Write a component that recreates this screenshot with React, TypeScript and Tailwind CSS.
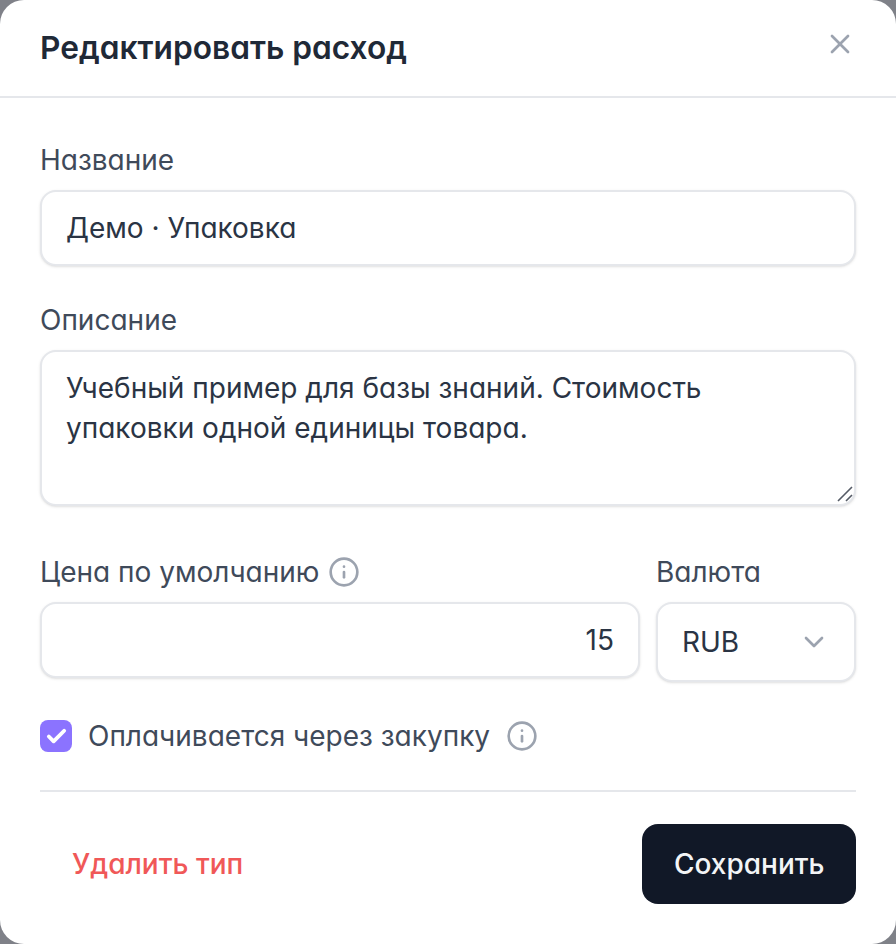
import React from 'react';
import { X, ChevronDown, Info, Check } from 'lucide-react';

const fontClass = "font-['Inter','Liberation_Sans',sans-serif] [font-feature-settings:'cv11']";

const App: React.FC = () => {
  return (
    <div className={`w-[896px] h-[944px] bg-[#7f8188] overflow-hidden ${fontClass}`}>
      <div className="w-full h-full bg-white rounded-[24px] flex flex-col">
        {/* header */}
        <div className="h-[98px] shrink-0 border-b-2 border-[#e5e7eb] pl-10 pr-11 flex items-center justify-between">
          <h2 className="text-[31.7px] leading-[40px] font-semibold text-[#1f2937]">Редактировать расход</h2>
          <button className="text-[#9ca3af] -mt-2 -mr-1">
            <X size={32} strokeWidth={2} />
          </button>
        </div>

        <div className="px-10 pt-[42px] flex flex-col flex-1">
          <label className="text-[28px] leading-[40px] text-[#3f4a5a] mb-[10px] block">Название</label>
          <input
            defaultValue="Демо · Упаковка"
            className="w-full h-[76px] px-[24px] text-[28px] text-[#2a3444] bg-white border-2 border-[#e5e7eb] rounded-2xl shadow-sm outline-none"
          />

          <label className="text-[28px] leading-[40px] text-[#3f4a5a] mt-[34px] mb-[10px] block">Описание</label>
          <div className="relative">
            <textarea
              defaultValue={'Учебный пример для базы знаний. Стоимость упаковки одной единицы товара.'}
              className="w-full h-[156px] px-[24px] py-4 text-[28px] leading-[40px] text-[#2a3444] bg-white border-2 border-[#e5e7eb] rounded-2xl shadow-sm outline-none block resize-none"
            />
            <svg width="18" height="18" viewBox="0 0 18 18" className="absolute right-[2px] bottom-[3px] text-[#555b66]">
              <path d="M2 16 16 2M10 16l6-6" stroke="currentColor" strokeWidth="1.6" fill="none" />
            </svg>
          </div>

          <div className="flex gap-4 mt-[46px]">
            <div className="flex-1">
              <div className="flex items-center gap-[9px] mb-[10px] h-[40px]">
                <span className="text-[28px] leading-[40px] text-[#3f4a5a]">Цена по умолчанию</span>
                <Info size={32} strokeWidth={2} className="text-[#9ca3af]" />
              </div>
              <input
                defaultValue="15"
                className="w-full h-[76px] px-[24px] text-right text-[28px] text-[#2a3444] bg-white border-2 border-[#e5e7eb] rounded-2xl shadow-sm outline-none"
              />
            </div>
            <div className="w-[200px]">
              <label className="text-[28px] leading-[40px] text-[#3f4a5a] mb-[10px] block">Валюта</label>
              <div className="h-[80px] px-[24px] flex items-center justify-between bg-white border-2 border-[#e5e7eb] rounded-2xl shadow-sm text-[28px] text-[#2a3444]">
                <span>RUB</span>
                <ChevronDown size={32} strokeWidth={2} className="text-[#9ca3af]" />
              </div>
            </div>
          </div>

          <div className="flex items-center mt-[38px] h-[32px]">
            <span className="w-8 h-8 rounded-lg bg-[#8b73ff] flex items-center justify-center text-white shrink-0">
              <Check size={23} strokeWidth={4} />
            </span>
            <span className="ml-4 text-[28px] leading-[40px] text-[#3f4a5a]">Оплачивается через закупку</span>
            <Info size={32} strokeWidth={2} className="ml-4 text-[#9ca3af]" />
          </div>

          <div className="h-[2px] bg-[#e5e7eb] mt-[38px]" />

          <div className="flex items-center justify-between mt-8">
            <button className="px-8 h-[80px] text-[28px] font-medium text-[#f05858]">Удалить тип</button>
            <button className="px-8 h-[80px] w-[214px] rounded-2xl bg-[#111827] text-[#f3f4f6] text-[28px] font-medium whitespace-nowrap">Сохранить</button>
          </div>
        </div>
      </div>
    </div>
  );
};

export default App;
